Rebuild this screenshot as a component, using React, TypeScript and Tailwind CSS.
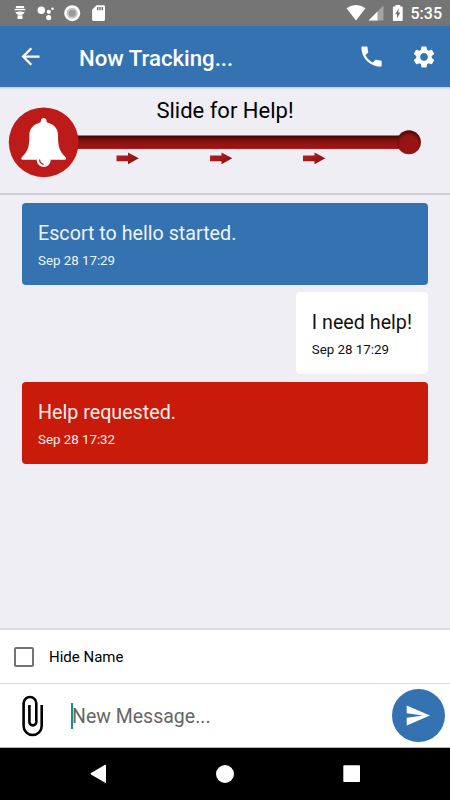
import { useState } from "react";
import { MdArrowBack, MdPhone, MdSettings } from "react-icons/md";

type Message = {
  id: number;
  text: string;
  time: string;
  kind: "info" | "mine" | "alert";
};

const messages: Message[] = [
  { id: 1, text: "Escort to hello started.", time: "Sep 28 17:29", kind: "info" },
  { id: 2, text: "I need help!", time: "Sep 28 17:29", kind: "mine" },
  { id: 3, text: "Help requested.", time: "Sep 28 17:32", kind: "alert" },
];

const bubbleStyles = {
  info: "bg-[#3572b2] text-[#eef4fb]",
  mine: "self-end bg-white text-[#111]",
  alert: "bg-[#c91b09] text-[#fdeeec]",
};

function StatusBar() {
  return (
    <div className="flex h-[26px] shrink-0 items-center justify-between bg-[#757575] pr-2 text-white">
      <svg width="120" height="26" fill="#fff">
        <path d="M16.3 6h7.4l.7 2.2h-8.8zM14.6 9h10.8v1.2H14.6z" />
        <path d="M15.4 11.4q2 1 3.2.1h2.8q1.2.9 3.2-.1-.5 3.4-4.6 3.6-4.1-.2-4.6-3.6z" />
        <path d="M17.5 15.300h5V19h-5z" />
        <circle cx="41.3" cy="10.3" r="3.7" />
        <circle cx="48.8" cy="11.8" r="2.1" />
        <circle cx="52.5" cy="8.7" r="1.3" />
        <circle cx="48.7" cy="17.6" r="2.6" />
        <circle cx="72.2" cy="13.2" r="8" />
        <circle cx="72.2" cy="13.2" r="5.5" fill="#c4c4c4" />
        <circle cx="72.2" cy="13.2" r="3.5" fill="#9b9b9b" />
        <path d="M96.5 5.300h7.200q1.300 0 1.300 1.300v13q0 1.300-1.300 1.300H93.400q-1.300 0-1.300-1.300V9.800z" />
        <path d="M97 7h1.500v3.300H97zM99.300 7h1.500v3.300h-1.500zM101.600 7h1.500v3.300h-1.500z" fill="#757575" />
      </svg>
      <div className="flex items-center">
        <svg width="62" height="26" fill="#fff">
          <path d="M.5 8.200Q10 1.800 19.500 8.200L10 20.500z" />
          <path d="M37.500 5.500V20.500H22.500z" opacity=".35" />
          <path d="M31.500 11.500v9h-9z" />
          <path d="M49.400 6.500V5h4.800v1.500h1.500q1 0 1 1v12.400q0 1-1 1h-7.800q-1 0-1-1V7.500q0-1 1-1z" />
          <path d="M52.800 8.300l-3.600 6H51v4.300l3.400-6h-2z" fill="#757575" />
        </svg>
        <span className="ml-[3px] pt-[2px] text-[16px] font-medium leading-none">5:35</span>
      </div>
    </div>
  );
}

function AppBar() {
  return (
    <header className="flex h-[61px] shrink-0 items-center bg-[#3572b2] pl-[17px] pr-[13px] text-white">
      <button aria-label="Back">
        <MdArrowBack size={27} />
      </button>
      <h1 className="ml-[35px] flex-1 pt-[4px] text-[22.2px] font-medium">Now Tracking...</h1>
      <button aria-label="Call">
        <MdPhone size={27} />
      </button>
      <button aria-label="Settings" className="ml-[26px]">
        <MdSettings size={26} />
      </button>
    </header>
  );
}

function HelpSlider() {
  return (
    <section className="h-[108px] shrink-0 border-b-2 border-[#cfced3] bg-linear-to-b from-[#cdccd1] to-[#efeef4] to-[3px]">
      <h2 className="h-[18px] pt-[10px] text-center text-[22px] leading-7 text-black">
        Slide for Help!
      </h2>
      <svg width="450" height="78" className="block">
        <defs>
          <linearGradient id="track" x1="0" y1="0" x2="0" y2="1">
            <stop offset="0" stopColor="#3a0808" />
            <stop offset=".2" stopColor="#640c0c" />
            <stop offset=".5" stopColor="#8f1212" />
            <stop offset=".9" stopColor="#9c1515" />
            <stop offset="1" stopColor="#c01c1c" />
          </linearGradient>
          <linearGradient id="arrow" x1="0" y1="0" x2="1" y2="1">
            <stop offset="0" stopColor="#c02020" />
            <stop offset="1" stopColor="#7d1010" />
          </linearGradient>
          <radialGradient id="knob" cx=".5" cy=".62" r=".62">
            <stop offset=".6" stopColor="#981414" />
            <stop offset="1" stopColor="#4a0909" />
          </radialGradient>
        </defs>
        <path d="M60 30.500H399V44H60z" fill="url(#track)" />
        <circle cx="408.900" cy="37.300" r="12" fill="url(#knob)" />
        <circle cx="43.700" cy="37.300" r="34.900" fill="#bd1a1a" />
        <path
          fill="#fff"
          d="M40.900 15.800C40.900 12 46.500 12 46.500 15.800C46.500 17 47 17.600 48.500 18C54.500 19.800 58 24 58 30C58 41 59 46 65.800 52.500C66.500 53.600 66 54.700 65 54.700H22.400C21.400 54.700 20.900 53.600 21.600 52.500C28.400 46 29.400 41 29.400 30C29.400 24 33 19.800 38.900 18C40.400 17.600 40.900 17 40.900 15.800z"
        />
        <circle cx="43.700" cy="55.200" r="6.900" fill="#fff" />
        <path d="M39.500 54.500q.3 4 4.200 4.800" fill="none" stroke="#bd1a1a" strokeWidth="1.200" />
        {[116.5, 210, 303].map((x) => (
          <path
            key={x}
            d={`M${x} 50.500h11.500v-3l10.800 5.700-10.800 6v-3H${x}z`}
            fill="url(#arrow)"
          />
        ))}
      </svg>
    </section>
  );
}

function Bubble({ message }: { message: Message }) {
  return (
    <div className={`h-[82px] rounded px-4 pt-[17px] ${bubbleStyles[message.kind]}`}>
      <p className="text-[19.7px] leading-7">{message.text}</p>
      <p className="mt-[3px] text-[13.3px] leading-5">{message.time}</p>
    </div>
  );
}

function NavBar() {
  return (
    <nav className="h-[52px] shrink-0 bg-black">
      <svg width="450" height="52" fill="#fff">
        <path d="M106 17.300v17q0 1-.9.500L91 26.500q-.9-.7 0-1.400l14.100-8.300q.9-.5.900.5z" />
        <circle cx="225" cy="26" r="9" />
        <rect x="343.300" y="17.300" width="16.700" height="16.700" rx=".8" />
      </svg>
    </nav>
  );
}

export default function App() {
  const [hideName, setHideName] = useState(false);
  const [draft, setDraft] = useState("");

  return (
    <div className="flex h-[800px] w-[450px] flex-col overflow-hidden bg-[#efeef4] font-[Roboto,sans-serif]">
      <StatusBar />
      <AppBar />
      <HelpSlider />

      <main className="flex flex-1 flex-col gap-[7.5px] px-[22px] pt-[7.5px]">
        {messages.map((m) => (
          <Bubble key={m.id} message={m} />
        ))}
      </main>

      <div className="h-[55px] shrink-0 border-t-2 border-[#dddce0] bg-white">
        <label className="flex h-[53px] items-center pl-[14px] text-[15px] text-black">
          <input
            type="checkbox"
            checked={hideName}
            onChange={(e) => setHideName(e.target.checked)}
            className="mr-[15px] size-5 appearance-none rounded-[2px] border-2 border-[#737373] checked:bg-[#3572b2]"
          />
          <span className="pt-0.5">Hide Name</span>
        </label>
      </div>

      <div className="flex h-[65px] shrink-0 items-center border-y border-t-[#dcdcdc] border-b-[#b5b5b5] bg-white pl-[22px] pr-[5.5px]">
        <svg width="22" height="42" fill="none" stroke="#000" strokeWidth="2.6">
          <path d="M19.700 10V31a9.050 9.050 0 0 1-18.100 0V8.300a6.350 6.350 0 0 1 12.700 0V26.900a3.450 3.450 0 0 1-6.900 0V10" />
        </svg>
        <div className="ml-[27px] h-[26px] w-[2px] bg-[#169482]" />
        <input
          value={draft}
          onChange={(e) => setDraft(e.target.value)}
          placeholder="New Message..."
          className="-ml-px min-w-0 flex-1 pt-[3px] text-[19.5px] outline-none placeholder:text-[#666]"
        />
        <button
          aria-label="Send"
          className="flex size-[52.5px] items-center justify-center rounded-full bg-[#3572b2] text-white"
        >
          <svg width="24" height="21" fill="currentColor">
            <path d="M.7.500L24 10.500.7 20.500V12.700L17 10.500.7 8.300z" />
          </svg>
        </button>
      </div>

      <NavBar />
    </div>
  );
}
